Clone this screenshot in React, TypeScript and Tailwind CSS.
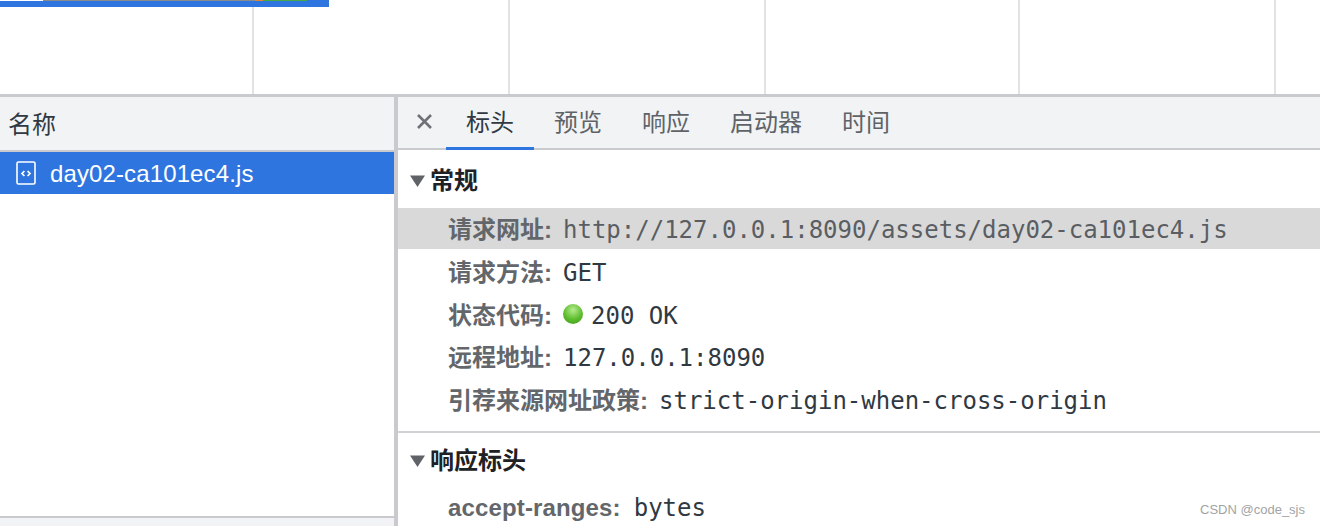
const mono = "font-['DejaVu_Sans_Mono',monospace]";
const cjk = "font-['Liberation_Sans','Noto_Sans_CJK_SC',sans-serif]";

const TABS = ["标头", "预览", "响应", "启动器", "时间"];
const ROWS = [
  { label: "请求网址:", value: "http://127.0.0.1:8090/assets/day02-ca101ec4.js", active: true },
  { label: "请求方法:", value: "GET" },
  { label: "状态代码:", value: "200 OK", dot: true },
  { label: "远程地址:", value: "127.0.0.1:8090" },
  { label: "引荐来源网址政策:", value: "strict-origin-when-cross-origin" },
];

function Triangle() {
  return (
    <svg width="15" height="12" viewBox="0 0 15 12" className="shrink-0">
      <path d="M0 0.5h15L7.5 12z" fill="#5f6368" />
    </svg>
  );
}

function FileIcon() {
  return (
    <svg width="20" height="24" viewBox="0 0 20 24" fill="none" className="shrink-0">
      <rect x="1" y="1" width="18" height="22" rx="1.5" stroke="#fff" strokeWidth="1.6" />
      <path d="M8.4 10 6 12.5 8.4 15M11.6 10l2.4 2.5-2.4 2.5" stroke="#fff" strokeWidth="1.7" />
    </svg>
  );
}

function Row({ label, value, active, dot }: { label: string; value: string; active?: boolean; dot?: boolean }) {
  return (
    <div
      className={`flex items-center pl-[50px] pt-[3px] text-[24px] whitespace-nowrap ${
        active ? "mb-px h-[41px] bg-[#d9d9d9]" : "h-[43px]"
      }`}
    >
      <span className={`${cjk} font-bold text-[#63676b]`}>{label}</span>
      {dot && (
        <span className="ml-[11px] h-[20px] w-[20px] -translate-y-[2px] rounded-full bg-[radial-gradient(circle_at_50%_30%,#b5ec8f,#5cbc2c_55%,#3f9a1c)]" />
      )}
      <span className={`${mono} ${dot ? "ml-[8px]" : "ml-[11px]"} ${active ? "text-[#5a5e63]" : "text-[#303942]"}`}>{value}</span>
    </div>
  );
}

export default function App() {
  return (
    <div className={`flex h-[526px] w-[1320px] flex-col overflow-hidden bg-white ${cjk}`}>
      {/* waterfall strip */}
      <div className="relative h-[94px] shrink-0">
        <div className="grid h-full grid-cols-[254px_256px_256px_254px_256px_44px]">
          {[0, 1, 2, 3, 4].map((i) => (
            <div key={i} className="border-r-2 border-[#e2e2e2]" />
          ))}
        </div>
        <div className="absolute left-0 top-0 flex h-[7px] w-[329px] items-start bg-[#2e75e0]">
          <div className="h-px w-[43px] bg-white" />
          <div className="h-px w-[212px] bg-[#8a8a8a]" />
          <div className="h-px w-[8px] bg-[#e0862e]" />
          <div className="h-px w-[44px] bg-[#46a846]" />
        </div>
      </div>

      <div className="flex min-h-0 flex-1 border-t-[3px] border-[#c9cacd]">
        {/* name column */}
        <div className="flex w-[394px] shrink-0 flex-col">
          <div className="flex h-[53px] shrink-0 items-center bg-[#f1f3f5] pl-[8px] pt-[2px] text-[24px] text-[#303942]">名称</div>
          <div className="h-[2px] shrink-0 bg-[#c9cacd]" />
          <div className="flex h-[42px] shrink-0 items-center gap-[14px] bg-[#2e75e0] pl-[16px] text-[24px] text-white">
            <FileIcon />
            <span className="pt-[2px] tracking-[0.12px]">day02-ca101ec4.js</span>
          </div>
          <div className="flex-1" />
          <div className="h-[10px] shrink-0 border-t-2 border-[#c9cacd] bg-[#f1f3f5]" />
        </div>
        <div className="w-[4px] shrink-0 bg-[#c9cacd]" />

        {/* detail column */}
        <div className="relative flex min-w-0 flex-1 flex-col">
          <div className="flex h-[53px] shrink-0 items-stretch border-b-2 border-[#c9cacd] bg-[#f1f3f5] text-[24px] text-[#5f6368]">
            <span className="flex w-[48px] items-center justify-center pb-[3px] pl-[4px] text-[#6e7175]">
              <svg width="15" height="15" viewBox="0 0 15 15" fill="none">
                <path d="M1 1l13 13M14 1 1 14" stroke="currentColor" strokeWidth="2.6" />
              </svg>
            </span>
            {TABS.map((tab, i) => (
              <div
                key={tab}
                className={`flex items-center px-[20px] pt-[1px] ${i === 0 ? "-mb-[2px] border-b-[3px] border-[#2e75e0] text-[#303942]" : ""}`}
              >
                {tab}
              </div>
            ))}
          </div>

          <div className="flex h-[58px] shrink-0 items-center gap-[5px] pl-[12px] pt-[4px] text-[24px] font-bold text-[#202124]">
            <Triangle />
            常规
          </div>
          {ROWS.map((row) => (
            <Row key={row.label} {...row} />
          ))}
          <div className="mt-[10px] h-[2px] shrink-0 bg-[#d0d1d4]" />
          <div className="flex h-[52px] shrink-0 items-center gap-[5px] pl-[12px] pt-[3px] text-[24px] font-bold text-[#202124]">
            <Triangle />
            响应标头
          </div>
          <div className="flex items-center pl-[50px] pt-[5px] text-[24px]">
            <span className="font-bold tracking-[0.14px] text-[#63676b]">accept-ranges:</span>
            <span className={`${mono} ml-[13px] text-[#303942]`}>bytes</span>
          </div>
          <span className="absolute bottom-[7px] right-[15px] text-[13px] text-[#a3a3a3]">CSDN @code_sjs</span>
        </div>
      </div>
    </div>
  );
}
